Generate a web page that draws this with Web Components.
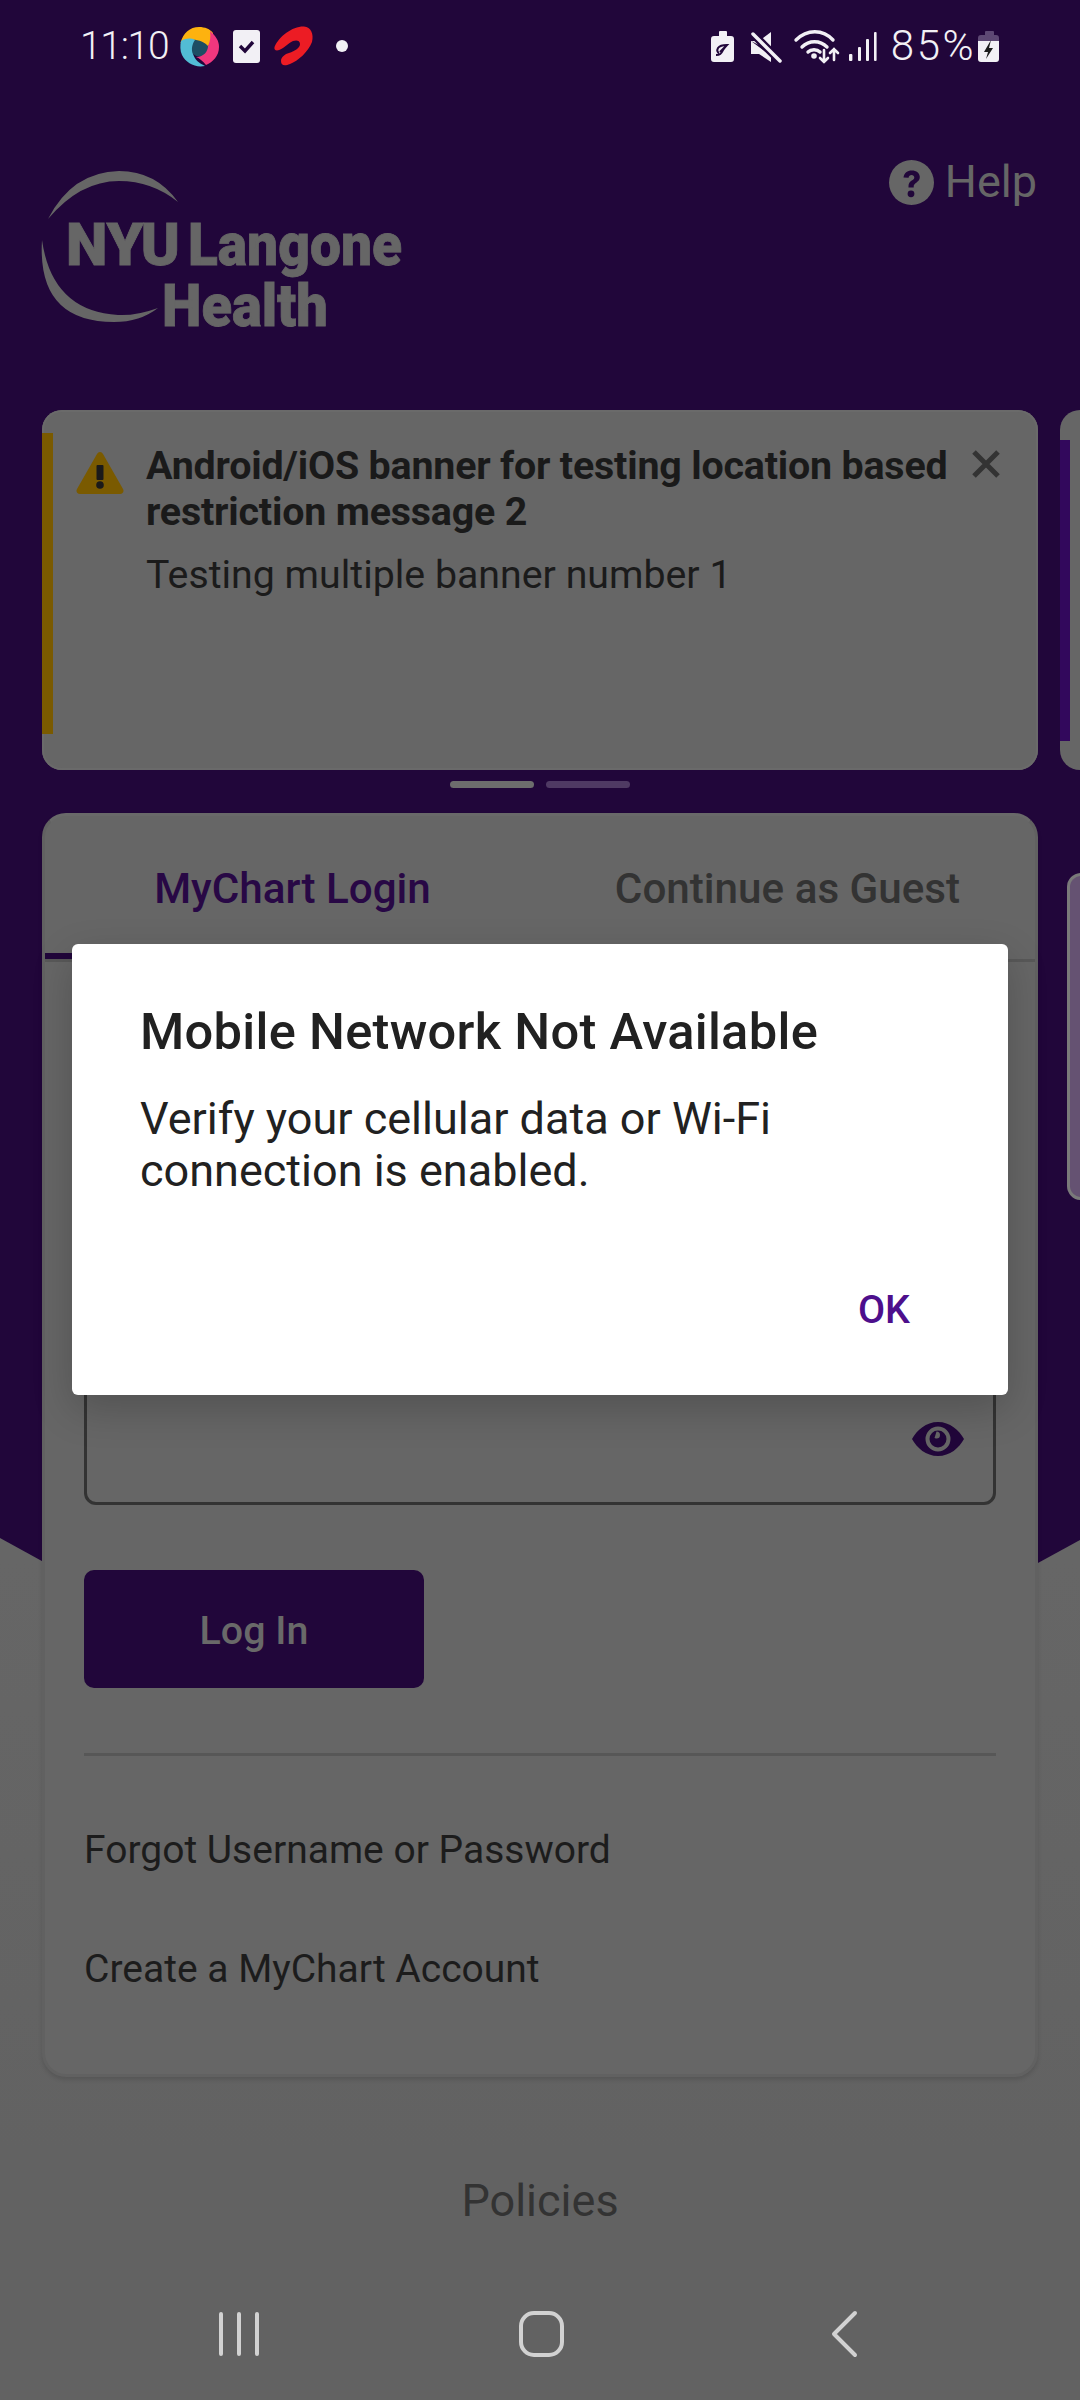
<!DOCTYPE html>
<html lang="en"><head><meta charset="utf-8"><title>NYU Langone Health</title>
<style>html,body{margin:0;padding:0;background:#626262}body{font-family:Roboto,"Liberation Sans",sans-serif}</style>
</head><body>
<app-shell>
  <status-bar slot="status"></status-bar>
  <top-header slot="header"></top-header>
  <banner-carousel slot="banners">
    <banner-card heading="Android/iOS banner for testing location based restriction message 2" message="Testing multiple banner number 1"></banner-card>
  </banner-carousel>
  <login-card slot="login"></login-card>
  <footer-link slot="footer">Policies</footer-link>
  <nav-bar slot="nav"></nav-bar>
  <alert-dialog slot="dialog" heading="Mobile Network Not Available" action="OK">Verify your cellular data or Wi-Fi connection is enabled.</alert-dialog>
</app-shell>
<script>
function def(name, html, init){
  customElements.define(name, class extends HTMLElement{
    constructor(){super();const r=this.attachShadow({mode:'open'});r.innerHTML=html;}
    connectedCallback(){ if(init) init(this); }
  });
}
def('app-shell',`<style>
:host{display:block;position:relative;width:1080px;height:2400px;overflow:hidden;background:linear-gradient(#666 0,#666 1560px,#626262 2150px,#626262 100%)}
.purple{position:absolute;inset:0;background:#21063a;clip-path:polygon(0 0,100% 0,100% 1540px,50% 1835px,0 1538px)}
.flow{position:relative;display:flex;flex-direction:column;height:100%}
.grow{flex:1}
</style><div class="purple"></div><div class="flow">
<slot name="status"></slot><slot name="header"></slot><slot name="banners"></slot><slot name="login"></slot><slot name="footer"></slot><div class="grow"></div><slot name="nav"></slot></div><slot name="dialog"></slot>`);

def('status-bar',`<style>
:host{display:block;height:92px;color:#f2f0f5;font-family:Roboto,sans-serif;font-weight:300}
.row{display:flex;align-items:center;height:92px;padding:0 0 0 80px;justify-content:space-between;box-sizing:border-box;width:1000px}
.side{display:flex;align-items:center}
.t{font-size:39px;line-height:92px;letter-spacing:-1.3px;white-space:nowrap}
.p{font-size:42px;letter-spacing:2.5px;margin-left:12px}
svg{display:block;flex:none}
</style><div class="row"><div class="side"><span class="t">11:10</span>
<svg style="margin-left:12px" width="168" height="92" viewBox="180 0 168 92">
<circle cx="199.5" cy="46.5" r="10" fill="#1d4e63"/>
<path d="M180.5 43C183 33 190 27 199 27C205 27 210 29 213 33C213 39 211 43 208 46C203 40 191 37 180.5 43Z" fill="#fdb20f"/>
<path d="M210 31C216 36 219 41 219 47C219 56 213 62 206 65C203 61 199 58 196 57C204 57 208 51 208 46C210 42 211 36 210 31Z" fill="#f0377e"/>
<path d="M181 41C186 38 191 38 195 40C192 44 191 50 193 54C195 60 199 63 205 66C195 68 186 63 182 55C180 51 180 45 181 41Z" fill="#52bcd5"/>
<rect x="233" y="30" width="27" height="33" rx="3" fill="#f2f0f5"/><path d="M240 46l5 5 8-9" fill="none" stroke="#21063a" stroke-width="3.4"/>
<path d="M274.500 47C279 36 293 26 304 26.500C311 27 314 34 312 42C308 52 298 61 290 64C285 66 281 66 281 61C281 57 285 54 289 53C295 51 300 48 300 44C300 40 296 40 293 41C288 43 283 50 277 50.500C275 50.500 274 49 274.500 47Z" fill="#ec1c24"/>
<circle cx="342" cy="46" r="6" fill="#f2f0f5"/></svg></div>
<div class="side"><svg width="168" height="92" viewBox="711 0 168 92">
<path d="M714 36h5v-4a1 1 0 0 1 1-1h6a1 1 0 0 1 1 1v4h4a3 3 0 0 1 3 3v20a3 3 0 0 1-3 3h-17a3 3 0 0 1-3-3V39a3 3 0 0 1 3-3z" fill="#f2f0f5"/><path d="M716 55c4 0 5-1 7-5 2-3 4-5 4-5s-7 0-9 3c-1 2-1 4 1 5M720 52l5-5" fill="none" stroke="#21063a" stroke-width="2"/>
<path d="M751 41h8l12-9v19zM751 41v13h8l12 8v-6z" fill="#f2f0f5"/><path d="M753 34l27 27" stroke="#21063a" stroke-width="8"/><path d="M753 34l27 27" stroke="#f2f0f5" stroke-width="3.5" stroke-linecap="round"/>
<g fill="none" stroke="#f2f0f5" stroke-width="3.4" stroke-linecap="round"><path d="M796 40c11-11 27-11 37 0M802 47c7-7 18-7 25 0M808 52c3-3 9-3 12 0"/><path d="M824 50v12M820 58l4 4 4-4M834 60V49M830 53l4-4 4 4" stroke-width="2.6"/></g><circle cx="814" cy="56" r="2.8" fill="#f2f0f5"/>
<g fill="#f2f0f5"><rect x="849" y="54" width="3.4" height="7" rx="1"/><rect x="858" y="47" width="3" height="14" rx="1"/><rect x="866" y="39" width="3" height="22" rx="1"/><rect x="874" y="32" width="2.6" height="29" rx="1"/></g>
</svg><span class="t p">85%</span>
<svg style="margin-left:2px" width="22" height="92" viewBox="979 0 22 92"><path d="M979 41v-3a3 3 0 0 1 3-3h4v-3a1 1 0 0 1 1-1h7a1 1 0 0 1 1 1v3h2a3 3 0 0 1 3 3v3z" fill="#5d4873"/><path d="M979 41h21v18a3 3 0 0 1-3 3h-15a3 3 0 0 1-3-3z" fill="#f2f0f5"/><path d="M992 40l-7 12h4l-2 7 7-11h-4z" fill="#1c1c1c"/></svg></div></div>`);

def('top-header',`<style>
:host{display:flex;height:318px;justify-content:space-between;align-items:flex-start;color:#666;font-family:Roboto,sans-serif}
.logo{position:relative;width:420px;height:318px;box-sizing:border-box;padding-top:122px;font-weight:900;font-size:60px;line-height:61px;-webkit-text-stroke:.8px #666}
.logo svg{position:absolute;left:0;top:0;display:block}
.r{display:flex;white-space:nowrap}
.r span{display:block;flex:none;transform-origin:0 0}
.help{display:flex;align-items:center;margin:67px 43px 0 0;font-size:45px;gap:11px;line-height:46px}
.help svg{display:block}
</style>
<div class="logo"><svg width="420" height="318" viewBox="0 92 420 318">
<path d="M48 219Q72 172 119 171Q156 171 178 202Q152 181 119 181Q80 181 48 219Z M42 240Q37 322 114 322Q140 322 158 308Q136 316 118 315Q52 311 42 240Z" fill="#666"/></svg>
<div class="r" style="padding-left:66px"><span data-w="114">NYU</span><span data-w="214" style="margin-left:8px">Langone</span></div>
<div class="r" style="padding-left:162px"><span data-w="166">Health</span></div></div>
<div class="help"><svg width="45" height="45" viewBox="0 0 45 45"><circle cx="22.500" cy="22.500" r="22.500" fill="#666"/><path d="M14.500 17.500c.5-4.500 4-7 8.300-7 4.600 0 8 2.700 8 6.600 0 2.900-1.700 4.300-3.500 5.600-1.700 1.200-2.600 2-2.600 3.800v1h-5.200v-1.400c0-2.800 1.300-4.300 3.200-5.600 1.500-1 2.600-1.700 2.600-3.100 0-1.500-1.200-2.400-2.700-2.400-1.700 0-2.800 1-3 2.800z" fill="#21063a"/><circle cx="22" cy="33.800" r="3.400" fill="#21063a"/></svg><span>Help</span></div>`,
 el=>{el.shadowRoot.querySelectorAll('[data-w]').forEach(s=>{const w=+s.dataset.w,n=s.getBoundingClientRect().width;s.style.width=w+'px';s.style.transform='scaleX('+(w/n)+')';});});

def('banner-carousel',`<style>
:host{display:block}
.track{display:flex;gap:22px;padding-left:42px;width:1200px;box-sizing:border-box}
.next{width:60px;height:360px;flex:none;background:#666;border-radius:20px 0 0 20px;display:flex;align-items:center;box-sizing:border-box}
.next i{display:block;width:10px;height:301px;background:#32085c}
.dots{display:flex;justify-content:center;gap:12px;margin:11px 0 25px}
.dots b{display:block;width:84px;height:7px;border-radius:4px;background:#6d6d6d}
.dots b+b{background:#4f3a63}
</style><div class="track"><slot></slot><div class="next"><i></i></div></div><div class="dots"><b></b><b></b></div>`);

def('banner-card',`<style>
:host{display:flex;flex:none;width:996px;height:360px;box-sizing:border-box;background:#666;border-radius:20px;box-shadow:inset 0 0 0 2px #6a6a6a;align-items:center;position:relative;font-family:Roboto,sans-serif}
.bar{width:11px;height:301px;background:#7a5a00;flex:none;align-self:flex-start;margin-top:23px}
.ic{flex:none;margin:42px 0 0 23px;align-self:flex-start;display:block}
.c{align-self:flex-start;margin:33px 0 0 22px;width:815px}
h3{margin:0;font-size:39.4px;line-height:46px;font-weight:700;color:#1a1a1a;letter-spacing:-.2px}
p{margin:17px 0 0;font-size:39.3px;line-height:46px;color:#1b1b1b;font-weight:400}
.x{position:absolute;left:929px;top:39px;display:block}
</style><div class="bar"></div>
<svg class="ic" width="48" height="42" viewBox="0 0 48 42"><path d="M24 0c1.300 0 2.300.7 3 2l20 35c1.300 2.300 0 5-3 5H4c-3 0-4.300-2.700-3-5L21 2c.7-1.300 1.700-2 3-2z" fill="#7a5a00"/><rect x="20.500" y="13" width="7" height="15" rx="1" fill="#1a1a1a"/><circle cx="24" cy="33" r="3.800" fill="#1a1a1a"/></svg>
<div class="c"><h3></h3><p></p></div>
<svg class="x" width="30" height="30" viewBox="0 0 30 30"><path d="M3 3l24 24M27 3L3 27" stroke="#333" stroke-width="5"/></svg>`,
 el=>{const r=el.shadowRoot;r.querySelector('h3').textContent=el.getAttribute('heading');r.querySelector('p').textContent=el.getAttribute('message');});

def('login-card',`<style>
:host{display:flex;gap:29px;width:1200px;padding-left:42px;box-sizing:border-box;font-family:Roboto,sans-serif}
.card{flex:none;width:996px;height:1264px;box-sizing:border-box;background:#666;border-radius:24px;border:3px solid #616161;border-top-color:#696969;box-shadow:0 3px 4px rgba(0,0,0,.12);position:relative}
.tabs{display:flex;height:143px;border-bottom:3px solid #585858;box-sizing:content-box}
.tab{flex:1;display:flex;align-items:center;justify-content:center;font-size:42.2px;font-weight:500;color:#333;padding-top:2px;box-sizing:border-box}
.tab.on{color:#280845;box-shadow:inset 0 -6px 0 #21063a}
.form{padding:0 39px;display:flex;flex-direction:column}
.f{border:3px solid #333;border-radius:12px;box-sizing:border-box}
.f1{height:190px;margin-top:60px}
.f2{height:253px;margin-top:40px;display:flex;justify-content:flex-end;align-items:flex-end;padding:0 29px 46px}
.f2 svg{display:block}
.btn{width:340px;height:118px;margin-top:65px;padding-top:2px;box-sizing:border-box;background:#21063a;border-radius:10px;color:#696969;font-size:39.4px;font-weight:500;display:flex;align-items:center;justify-content:center}
hr{border:0;height:3px;background:#575757;margin:65px 0 0;width:912px}
a{display:block;color:#1c1c1c;font-size:39px;line-height:46px;text-decoration:none}
a.a1{margin-top:71px}a.a2{margin-top:73px}
.next{flex:none;width:90px;height:327px;margin-top:60px;background:#655272;border:3px solid #7a7a7a;border-right:0;border-radius:14px 0 0 14px;box-sizing:border-box}
</style><div class="card"><div class="tabs"><div class="tab on">MyChart Login</div><div class="tab">Continue as Guest</div></div>
<div class="form"><div class="f f1"></div><div class="f f2"><svg width="52" height="34" viewBox="0 0 52 34"><path fill-rule="evenodd" d="M26 0C38 0 47 8 52 17 47 26 38 34 26 34S5 26 0 17C5 8 14 0 26 0ZM26 4.500a12.500 12.500 0 1 0 0 25 12.500 12.500 0 0 0 0-25Z" fill="#21063a"/><path fill-rule="evenodd" d="M26 8.500a8.500 8.500 0 1 0 0 17 8.500 8.500 0 0 0 0-17ZM24.500 9.500a3.500 3.500 0 0 1 0 7c0 0-1 0-2-.6z" fill="#21063a"/></svg></div>
<div class="btn">Log In</div><hr>
<a class="a1" href="#">Forgot Username or Password</a><a class="a2" href="#">Create a MyChart Account</a></div></div><div class="next"></div>`);

def('footer-link',`<style>
:host{display:block;text-align:center;font-family:Roboto,sans-serif;font-size:45px;line-height:50px;color:#333;margin-top:99px}
</style><slot></slot>`);

def('nav-bar',`<style>:host{display:block;height:120px}svg{display:block}</style>
<svg width="1080" height="120" viewBox="0 2280 1080 120" fill="none" stroke="#d2d2d2" stroke-width="4" stroke-linecap="round" stroke-linejoin="round">
<path d="M221 2314v40M239 2314v40M257 2314v40"/><rect x="521" y="2313" width="41" height="42" rx="13"/><path d="M855 2313l-21 21 21 21"/></svg>`);

def('alert-dialog',`<style>
:host{position:absolute;left:72px;top:944px;width:936px;height:451px;box-sizing:border-box;background:#fff;border-radius:6px;box-shadow:0 14px 40px rgba(0,0,0,.2);padding:63px 69px 0 68px;display:flex;flex-direction:column;font-family:Roboto,sans-serif;color:#212121}
h2{margin:0;font-size:50.6px;line-height:50px;font-weight:500;letter-spacing:.3px}
p{margin:36px 0 0;font-size:45px;line-height:52px;font-weight:400;max-width:720px}
button{all:unset;align-self:flex-end;margin:90px 29px 0 0;font-size:39.4px;line-height:46px;font-weight:500;color:#4d0f8c;font-family:Roboto,sans-serif}
</style><h2></h2><p><slot></slot></p><button></button>`,
 el=>{const r=el.shadowRoot;r.querySelector('h2').textContent=el.getAttribute('heading');r.querySelector('button').textContent=el.getAttribute('action');});
</script></body></html>
